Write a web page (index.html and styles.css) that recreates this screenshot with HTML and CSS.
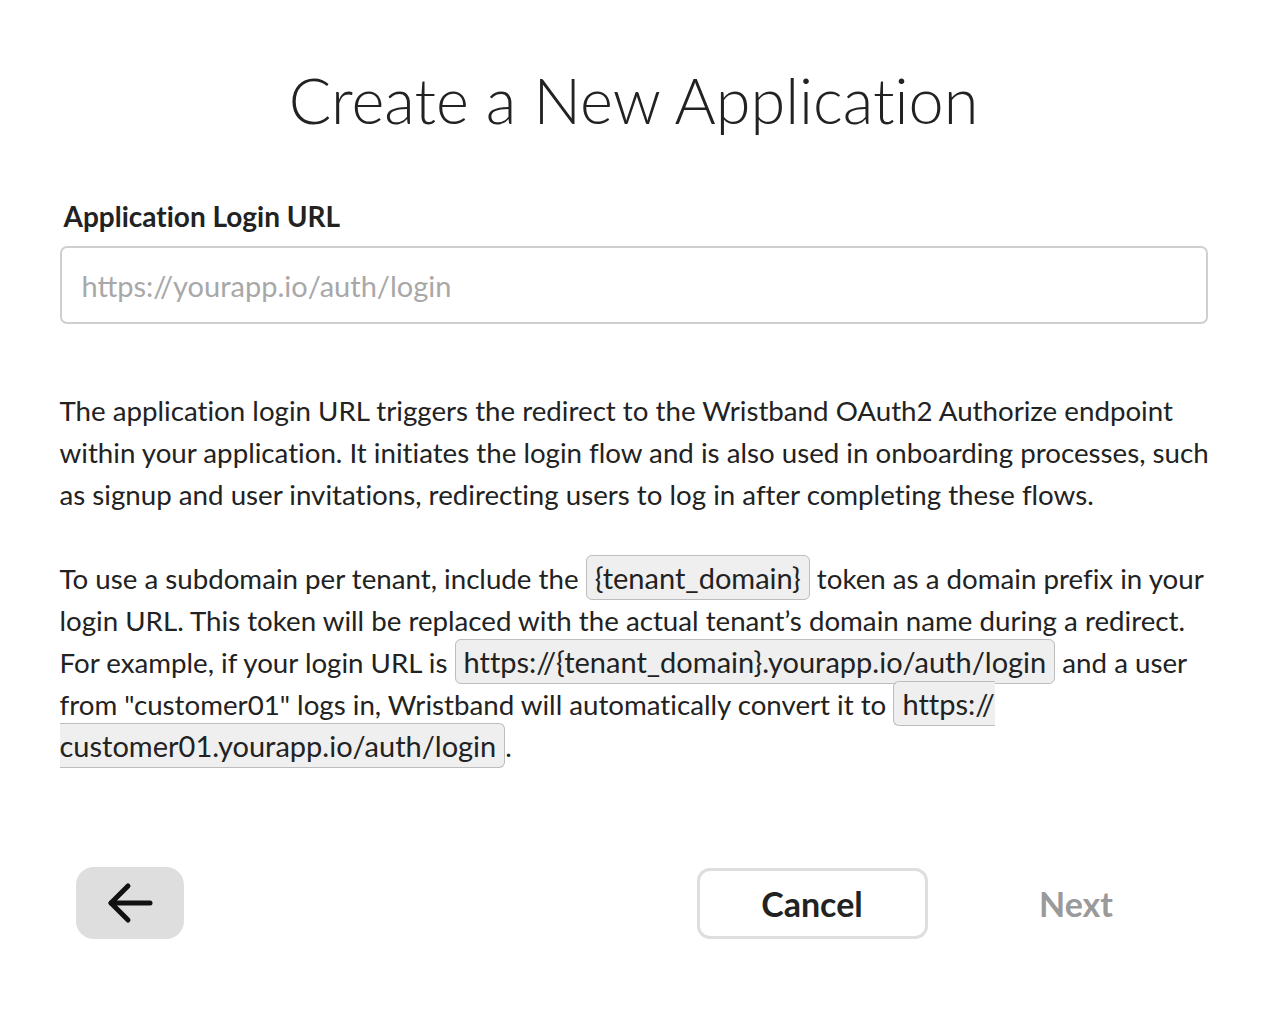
FILE: index.html
```html
<!DOCTYPE html>
<html lang="en">
<head>
<meta charset="utf-8">
<title>Create a New Application</title>
<link rel="stylesheet" href="styles.css">
</head>
<body>
<main class="page">
  <h1 class="title">Create a New Application</h1>
  <section class="form">
    <label class="label" for="login-url">Application Login URL</label>
    <input class="input" id="login-url" type="text" placeholder="https://yourapp.io/auth/login">
    <div class="desc">
      <p>The application login URL triggers the redirect to the Wristband OAuth2 Authorize endpoint within your application. It initiates the login flow and is also used in onboarding processes, such as signup and user invitations, redirecting users to log in after completing these flows.</p>
      <p>To use a subdomain per tenant, include the <code class="tok">{tenant_domain}</code> token as a domain prefix in your login URL. This token will be replaced with the actual tenant’s domain name during a redirect. For example, if your login URL is <code class="tok">https://{tenant_domain}.yourapp.io/auth/login</code> and a user from "customer01" logs in, Wristband will automatically convert it to <code class="tok">https:// customer01.yourapp.io/auth/login</code>.</p>
    </div>
  </section>
  <div class="actions">
    <button class="btn-back" type="button" aria-label="Back">
      <svg width="48" height="48" viewBox="0 0 48 48" fill="none" stroke="#111" stroke-width="5" stroke-linecap="round" stroke-linejoin="round"><path d="M44 24H5"/><path d="M22 7L5 24l17 17"/></svg>
    </button>
    <div class="right">
      <button class="btn btn-cancel" type="button">Cancel</button>
      <button class="btn btn-next" type="button" disabled>Next</button>
    </div>
  </div>
</main>
</body>
</html>
```
FILE: styles.css
```css
* { box-sizing: border-box; }
html, body { margin: 0; padding: 0; background: #fff; }
body {
  font-family: Lato, "Liberation Sans", sans-serif;
  font-variant-ligatures: none;
  color: #222;
}
.page {
  width: 1148px;
  margin: 0 auto;
  padding-top: 60px;
}
.title {
  margin: 0;
  text-align: center;
  font-weight: 300;
  font-size: 63px;
  line-height: 80px;
  color: #222;
}
.form {
  margin-top: 58px;
  display: flex;
  flex-direction: column;
}
.label {
  font-weight: 700;
  font-size: 28px;
  line-height: 36px;
  padding-left: 4px;
  color: #222;
}
.input {
  margin-top: 12px;
  height: 78px;
  width: 100%;
  border: 2px solid #cfcfcf;
  border-radius: 7px;
  padding: 0 20px;
  font-family: Lato, "Liberation Sans", sans-serif;
  font-size: 29px;
  color: #222;
  outline: none;
}
.input::placeholder { color: #a8a8a8; }
.desc {
  margin-top: 66px;
  margin-right: -6px;
  font-size: 27.7px;
  line-height: 42px;
  color: #222;
}
.desc p { margin: 0 0 42px; }
.desc p:last-child { margin-bottom: 0; }
.tok {
  font-family: Lato, "Liberation Sans", sans-serif;
  font-size: 29px;
  line-height: 1;
  background: #efefef;
  border: 1px solid #bdbdbd;
  border-radius: 6px;
  padding: 4px 8px;
  color: #222;
}
.actions {
  margin-top: 99px;
  padding: 0 16px;
  display: flex;
  justify-content: space-between;
  align-items: center;
}
.btn-back {
  width: 108px;
  height: 72px;
  border: none;
  border-radius: 18px;
  background: #dedede;
  display: flex;
  align-items: center;
  justify-content: center;
  padding: 0;
}
.right {
  display: flex;
  gap: 33px;
}
.btn {
  width: 231px;
  height: 71px;
  border-radius: 13px;
  font-family: Lato, "Liberation Sans", sans-serif;
  font-weight: 700;
  font-size: 34px;
  background: #fff;
}
.btn-cancel {
  border: 3px solid #dedede;
  color: #222;
}
.btn-next {
  border: 3px solid transparent;
  color: #9a9a9a;
}
```
